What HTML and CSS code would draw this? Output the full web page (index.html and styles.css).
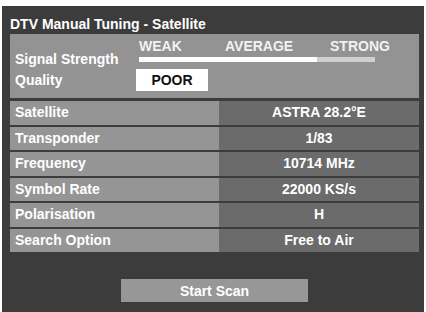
FILE: index.html
```html
<!DOCTYPE html>
<html>
<head>
  <title>DTV Manual Tuning - Satellite</title>
  <link rel="stylesheet" href="styles.css">
</head>
<body>
  <div class="panel">
    <h1 class="title">DTV Manual Tuning - Satellite</h1>

    <!-- signal meter -->
    <div class="signal">
      <div class="signal-labels">
        <div class="signal-label">Signal Strength</div>
        <div class="signal-label quality">Quality</div>
      </div>
      <div class="signal-meter">
        <div class="scale">
          <span class="weak">WEAK</span>
          <span class="average">AVERAGE</span>
          <span class="strong">STRONG</span>
        </div>
        <div class="bar"><div class="bar-fill" style="width: 178px"></div></div>
        <div class="quality-box">POOR</div>
      </div>
    </div>

    <div class="settings">
      <div class="setting-name">Satellite</div>
      <div class="setting-value">ASTRA 28.2°E</div>
      <div class="setting-name">Transponder</div>
      <div class="setting-value">1/83</div>
      <div class="setting-name">Frequency</div>
      <div class="setting-value">10714 MHz</div>
      <div class="setting-name">Symbol Rate</div>
      <div class="setting-value">22000 KS/s</div>
      <div class="setting-name">Polarisation</div>
      <div class="setting-value">H</div>
      <div class="setting-name">Search Option</div>
      <div class="setting-value">Free to Air</div>
    </div>

    <div class="actions">
      <button class="scan-button">Start Scan</button>
    </div>
  </div>
</body>
</html>
```

FILE: styles.css
```css
/* TV menu: manual satellite tuning */
body {
  margin: 0;
  padding: 0;
  background-color: #fff;
  font-family: 'Liberation Sans', Arial, sans-serif;
  font-weight: bold;
  font-size: 14px;
  line-height: 16px;
  color: #fff;
}

.panel {
  margin: 6px 2px 0 2px;
  width: 409px;
  height: 306px;
  padding: 0 5px 0 8px;
  background-color: #3c3c3c;
  overflow: hidden;
}

.title {
  margin: 0;
  padding: 10px 0 0 0;
  height: 18px;
  font-size: 14px;
  line-height: 16px;
}

.signal {
  display: grid;
  grid-template-columns: 126px 1fr;
  height: 64px;
  background-color: #939393;
}

.signal-labels {
  padding: 17px 0 0 5px;
  font-weight: bold;
}

.signal-label.quality {
  margin-top: 5px;
}

.signal-meter {
  padding-top: 4px;
}

.scale {
  display: flex;
  height: 16px;
  color: #f2f2f2;
}

.scale .weak {
  margin-left: 3px;
  width: 86px;
}

.scale .average {
  width: 105px;
}

.bar {
  margin: 3px 0 0 3px;
  width: 236px;
  height: 5px;
  background-color: #cfcfcf;
}

.bar-fill {
  height: 100%;
  background-color: #fff;
}

.quality-box {
  margin-top: 7px;
  width: 72px;
  height: 22px;
  line-height: 22px;
  text-align: center;
  color: #111;
  background-color: #fff;
}

.settings {
  display: grid;
  grid-template-columns: 209px 1fr;
  grid-auto-rows: 23.5px;
  row-gap: 2px;
  margin-top: 3px;
}

.setting-name {
  padding-left: 5px;
  line-height: 23.5px;
  background-color: #959595;
}

.setting-value {
  line-height: 23.5px;
  text-align: center;
  background-color: #6b6b6b;
}

.actions {
  display: flex;
  justify-content: center;
  margin-top: 27px;
}

.scan-button {
  width: 187px;
  height: 23px;
  padding: 0;
  border: none;
  background-color: #979797;
  color: #fff;
  font-family: inherit;
  font-weight: bold;
  font-size: 14px;
}
```
